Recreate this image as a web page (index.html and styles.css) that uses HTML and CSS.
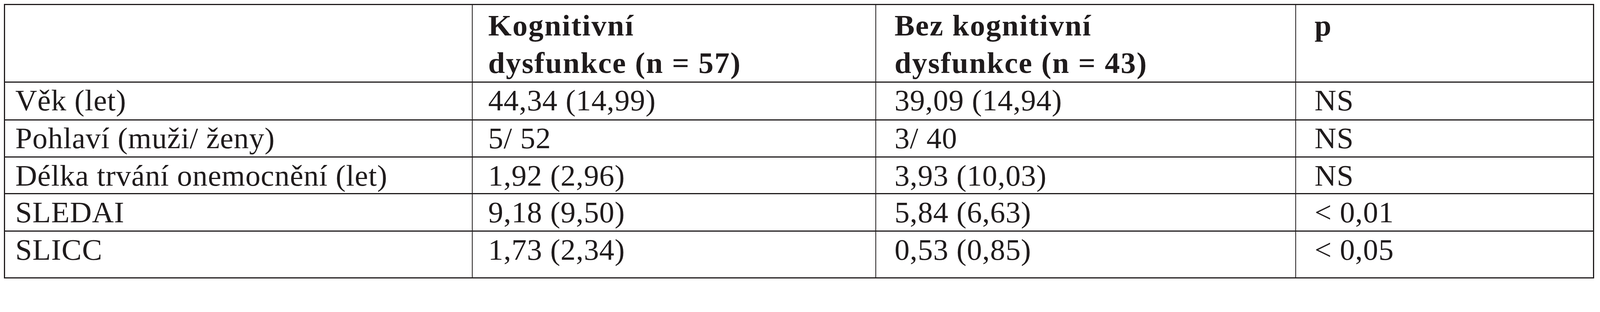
FILE: index.html
```html
<!DOCTYPE html>
<html lang="cs">
<head>
<meta charset="utf-8">
<title>Tabulka</title>
<link rel="stylesheet" href="styles.css">
</head>
<body>
<div class="data" role="table">
  <div class="cell head k1"></div>
  <div class="cell head k2">Kognitivní<br>dysfunkce (n = 57)</div>
  <div class="cell head k3">Bez kognitivní<br>dysfunkce (n = 43)</div>
  <div class="cell head k4">p</div>

  <div class="cell k1">Věk (let)</div>
  <div class="cell k2">44,34 (14,99)</div>
  <div class="cell k3">39,09 (14,94)</div>
  <div class="cell k4">NS</div>

  <div class="cell k1">Pohlaví (muži/ ženy)</div>
  <div class="cell k2">5/ 52</div>
  <div class="cell k3">3/ 40</div>
  <div class="cell k4">NS</div>

  <div class="cell k1">Délka trvání onemocnění (let)</div>
  <div class="cell k2">1,92 (2,96)</div>
  <div class="cell k3">3,93 (10,03)</div>
  <div class="cell k4">NS</div>

  <div class="cell k1">SLEDAI</div>
  <div class="cell k2">9,18 (9,50)</div>
  <div class="cell k3">5,84 (6,63)</div>
  <div class="cell k4">&lt; 0,01</div>

  <div class="cell last k1">SLICC</div>
  <div class="cell last k2">1,73 (2,34)</div>
  <div class="cell last k3">0,53 (0,85)</div>
  <div class="cell last k4">&lt; 0,05</div>
</div>
</body>
</html>
```
FILE: styles.css
```css
:root {
  --u: calc(100vw / 4517);
  --ink: #1f1b1c;
}

html, body {
  margin: 0;
  padding: 0;
  background: #ffffff;
  overflow: hidden;
}

body {
  padding: calc(11 * var(--u)) 0 0 calc(11 * var(--u));
  font-family: "Liberation Serif", "Times New Roman", serif;
  color: var(--ink);
}

*, *::before, *::after {
  box-sizing: border-box;
}

.data {
  display: grid;
  width: calc(4489 * var(--u));
  grid-template-columns:
    calc(1320 * var(--u))
    calc(1139 * var(--u))
    calc(1186 * var(--u))
    calc(838 * var(--u));
  grid-template-rows:
    calc(219 * var(--u))
    calc(107 * var(--u))
    calc(105 * var(--u))
    calc(104 * var(--u))
    calc(106 * var(--u))
    calc(129 * var(--u));
  border: calc(3.5 * var(--u)) solid var(--ink);
  font-size: calc(85 * var(--u));
  letter-spacing: calc(1 * var(--u));
}

.cell {
  white-space: nowrap;
  line-height: calc(100 * var(--u));
  padding-top: calc(1 * var(--u));
  border-right: calc(2.5 * var(--u)) solid var(--ink);
  border-bottom: calc(3.5 * var(--u)) solid var(--ink);
  overflow: hidden;
}

.cell.head {
  font-weight: bold;
  line-height: calc(105 * var(--u));
  padding-top: calc(6 * var(--u));
  letter-spacing: calc(2.5 * var(--u));
}

.cell.last {
  border-bottom: 0;
}

.k1 { padding-left: calc(29 * var(--u)); }
.k2 { padding-left: calc(44 * var(--u)); }
.k3 { padding-left: calc(52 * var(--u)); }
.k4 { padding-left: calc(52 * var(--u)); border-right: 0; }
```
